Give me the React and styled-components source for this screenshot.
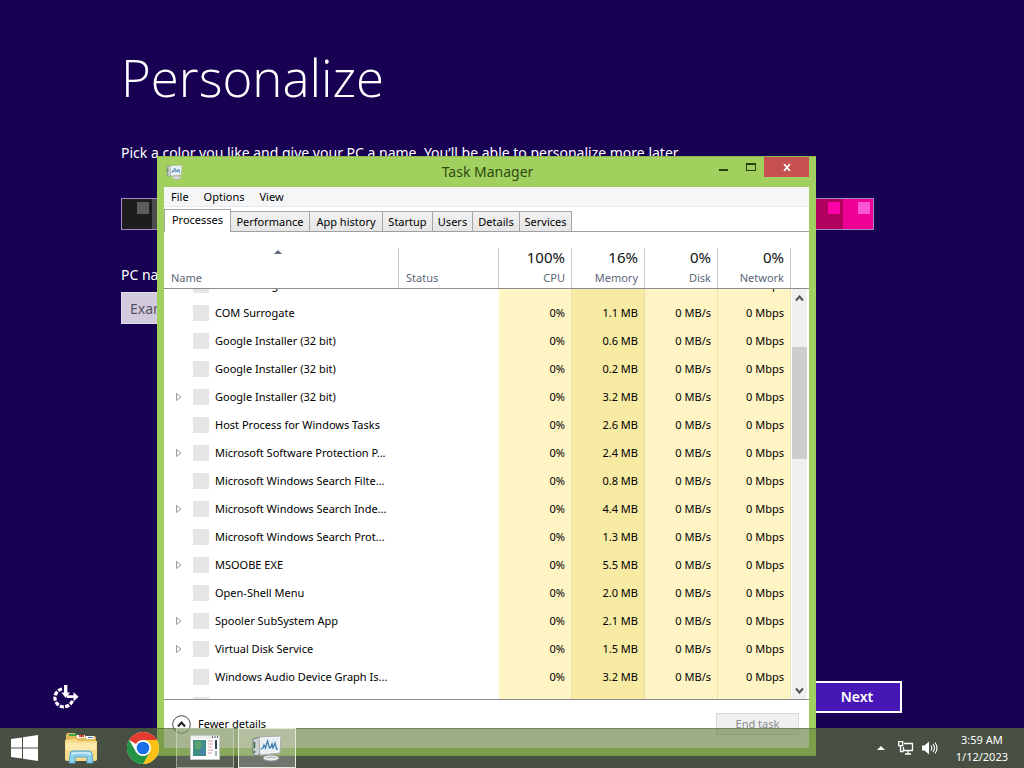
import React, { useLayoutEffect, useRef } from 'react';
import styled, { createGlobalStyle, css } from 'styled-components';

const Global = createGlobalStyle`
  *, *::before, *::after { box-sizing: border-box; }
  body { margin: 0; overflow: hidden; font-family: "Noto Sans", "Open Sans", sans-serif; font-size: 11px; color: #000; }
  button, input { font: inherit; color: inherit; }
`;

const Desktop = styled.div`
  position: relative;
  min-height: 100vh;
  background: #180052;
`;

const Setup = styled.main`
  display: flex;
  flex-direction: column;
  min-height: 100vh;
  padding: 42px 122px 55px 121px;
  color: #fff;
  font-size: 14px;
`;

const Heading = styled.h1`
  margin: 0 0 30px;
  font-family: "Open Sans", sans-serif;
  font-size: 51px;
  line-height: 70px;
  font-weight: 300;
`;

const Lead = styled.p`
  margin: 0 0 34px;
  line-height: 22px;
`;

const Swatches = styled.div`
  display: flex;
  height: 32px;
  margin-right: 28px;
  border: 1px solid #a58ac4;
`;

const Swatch = styled.input`
  appearance: none;
  flex: 1;
  height: 30px;
  margin: 0;
  padding: 3px 3px 0 0;
  background: ${(p) => p.$base};
  display: flex;
  justify-content: flex-end;
  &::after { content: ""; width: 12px; height: 12px; background: ${(p) => p.$accent}; }
`;

const Field = styled.label`
  display: flex;
  flex-direction: column;
  gap: 6px;
  margin-top: 34px;
  width: 300px;
  line-height: 22px;
`;

const NameInput = styled.input`
  height: 32px;
  padding: 0 8px;
  border: 1px solid #e4deec;
  background: #d1cbdd;
  &::placeholder { color: #55505e; opacity: 1; }
`;

const SetupFooter = styled.div`
  display: flex;
  justify-content: space-between;
  align-items: center;
  margin: auto 0 0 -68px;
`;

const PlainButton = styled.button`
  display: flex;
  padding: 0 ${(p) => p.$pad || 0}px;
  border: 0;
  background: none;
`;

const NextButton = styled.button`
  width: 90px;
  height: 32px;
  border: 2px solid #fff;
  background: #4617b4;
  color: #fff;
  font-size: 14px;
  line-height: 20px;
  font-weight: 600;
`;

const Window = styled.section`
  position: absolute;
  inset: 156px 208px 12px 157px;
  display: flex;
  flex-direction: column;
  padding: 0 7px 7px;
  background: #a2d05f;
  border: 1px solid #8db851;
  border-width: 1px 0;
`;

const TitleBar = styled.header`
  display: grid;
  grid-template-columns: 1fr auto 1fr;
  height: 30px;
  padding-left: 2px;
  flex: none;
`;

const Title = styled.h2`
  margin: 0;
  font-size: 14px;
  line-height: 30px;
  font-weight: 400;
  color: #2c4a12;
`;

const TitleIcon = styled.span`
  padding-top: 7px;
`;

const Controls = styled.div`
  display: flex;
  justify-content: flex-end;
`;

const Control = styled.button`
  display: flex;
  align-items: center;
  justify-content: center;
  width: ${(p) => (p.$close ? 45 : 27)}px;
  height: 20px;
  padding: 0;
  border: 0;
  background: ${(p) => (p.$close ? '#c75050' : 'none')};
`;

const Client = styled.div`
  flex: 1;
  min-height: 0;
  display: flex;
  flex-direction: column;
  background: #fff;
`;

const MenuBar = styled.nav`
  display: flex;
  gap: 1px;
  height: 20px;
  flex: none;
  background: #f5f6f7;
  border-bottom: 1px solid #e8e9ea;
`;

const MenuItem = styled.button`
  border: 0;
  padding: 0 7px;
  background: none;
  line-height: 19px;
`;

const Tabs = styled.div`
  display: flex;
  align-items: flex-end;
  height: 25px;
  flex: none;
  border-bottom: 1px solid #a0a0a0;
`;

const Tab = styled.button`
  width: ${(p) => p.$w}px;
  height: 20px;
  padding: 0;
  border: 1px solid #a5a5a5;
  border-width: 1px 1px 0 0;
  background: linear-gradient(#f1f1f1, #e6e6e6);
  line-height: 19px;
  white-space: nowrap;
  ${(p) =>
    p.$active &&
    css`
      height: 23px;
      margin-bottom: -1px;
      padding-bottom: 3px;
      border-left-width: 1px;
      background: #fff;
    `}
`;

const Table = styled.table`
  flex: 1;
  min-height: 0;
  display: flex;
  flex-direction: column;
`;

const rowGrid = css`
  display: grid;
  grid-template-columns: minmax(0, 235fr) 100px repeat(4, 73px);
`;

const Head = styled.thead`
  display: block;
  padding: 16px 18px 0 0;
  border-bottom: 1px solid #8c8c8c;
`;

const HeadRow = styled.tr`
  ${rowGrid}
  height: 40px;
`;

const HeadCell = styled.th`
  display: flex;
  flex-direction: column;
  justify-content: flex-end;
  padding: 0 6px 2px 7px;
  border-right: 1px solid #c9cbce;
  text-align: ${(p) => (p.$num ? 'right' : 'left')};
  line-height: 16px;
  font-weight: 400;
  color: #5b6678;
`;

const Total = styled.span`
  margin-bottom: 4px;
  font-size: 15px;
  line-height: 18px;
  color: #111;
`;

const SortMark = styled.svg`
  align-self: center;
  margin: 0 7px 16px 0;
`;

const Body = styled.tbody`
  flex: 1;
  min-height: 0;
  display: block;
  overflow: hidden;
  margin-right: 18px;
`;

const Row = styled.tr`
  ${rowGrid}
  height: 28px;
  line-height: 28px;
`;

const NameCell = styled.td`
  grid-column: span 2;
  display: flex;
  align-items: center;
  width: 235px;
  padding: 0 5px 0 11px;
`;

const Expander = styled.span`
  display: flex;
  flex: none;
  width: 18px;
`;

const ProcIcon = styled.span`
  flex: none;
  width: 16px;
  height: 16px;
  margin-right: 6px;
  background: #e5e5e5;
`;

const ProcName = styled.span`
  white-space: nowrap;
`;

const Metric = styled.td`
  padding: 0 6px 0 0;
  text-align: right;
  white-space: nowrap;
  background: ${(p) => (p.$hot ? '#f7eaa3' : '#fff4c4')};
  border-right: 1px solid ${(p) => (p.$hot ? '#e6dca0' : '#ece0ac')};
`;

const Grid = styled.div`
  position: relative;
  flex: 1;
  min-height: 0;
  display: flex;
  border-bottom: 1px solid #8c8c8c;
`;

const ScrollBar = styled.div`
  position: absolute;
  inset: 57px 2px 0 auto;
  width: 15px;
  display: flex;
  flex-direction: column;
  align-items: center;
  background: #f0f0f0;
`;

const ScrollButton = styled.button`
  display: flex;
  align-items: center;
  justify-content: center;
  height: 18px;
  width: 15px;
  padding: 0;
  border: 0;
  background: none;
`;

const Thumb = styled.div`
  width: 15px;
  height: 112px;
  margin: 40px 0 auto;
  background: #cdcdcd;
`;

const Footer = styled.footer`
  display: flex;
  justify-content: space-between;
  align-items: center;
  height: 48px;
  flex: none;
  padding: 0 10px 0 8px;
`;

const Fewer = styled.button`
  display: flex;
  align-items: center;
  gap: 7px;
  padding: 0;
  border: 0;
  background: none;
  line-height: 20px;
`;

const EndTask = styled.button`
  width: 83px;
  height: 22px;
  padding: 0;
  border: 1px solid #d9d9d9;
  background: #efefef;
  line-height: 20px;
  &:disabled { color: #8b8b8b; }
`;

const Taskbar = styled.footer`
  position: absolute;
  inset: auto 0 0 0;
  display: flex;
  align-items: stretch;
  height: 40px;
  background: rgba(101, 127, 60, 0.63);
  box-shadow: inset 0 1px rgba(60, 75, 45, 0.4);
`;

const StartButton = styled.button`
  display: flex;
  align-items: center;
  width: 52px;
  padding: 0 0 0 11px;
  border: 0;
  background: none;
`;

const TaskButton = styled.button`
  display: flex;
  align-items: center;
  justify-content: center;
  width: 58px;
  margin-right: 4px;
  padding: 0;
  border: 1px solid ${(p) => (p.$active ? '#e4ebd8' : p.$open ? 'rgba(225,235,210,.5)' : 'transparent')};
  background: ${(p) => (p.$active ? 'rgba(255,255,255,.22)' : p.$open ? 'rgba(255,255,255,.1)' : 'none')};
`;

const Tray = styled.div`
  display: flex;
  align-items: center;
  gap: 8px;
  margin-left: auto;
  padding-right: 16px;
`;

const Clock = styled.time`
  margin-left: 10px;
  color: #fff;
  line-height: 17px;
  text-align: center;
`;

const COLORS = [
  ['#1d1d1d', '#5c5c5c'], ['#4c4c4c', '#f3b200'], ['#261300', '#77b900'], ['#380000', '#2572eb'],
  ['#40002e', '#ad103c'], ['#180052', '#4617b4'], ['#001940', '#006ac1'], ['#001e4e', '#008287'],
  ['#004d60', '#199900'], ['#004a00', '#00c13f'], ['#15992a', '#ff981d'], ['#e56c19', '#ff2e12'],
  ['#b81b1b', '#ff1d77'], ['#b81b6c', '#aa40ff'], ['#691bb8', '#1faeff'], ['#1b58b8', '#56c5ff'],
  ['#569ce3', '#00d8cc'], ['#00aaaa', '#91d100'], ['#83ba1f', '#e1b700'], ['#d39d09', '#ff76bc'],
  ['#e064b7', '#00a3a3'], ['#00a4a4', '#fe7c22'], ['#ff7d23', '#c1004f'], ['#b2005f', '#ff00a8'],
  ['#ef0095', '#ff55d8'],
];

const PROCESSES = [
  ['COM Surrogate', '0.8'], ['COM Surrogate', '1.1'], ['Google Installer (32 bit)', '0.6'],
  ['Google Installer (32 bit)', '0.2'], ['Google Installer (32 bit)', '3.2', true],
  ['Host Process for Windows Tasks', '2.6'], ['Microsoft Software Protection P...', '2.4', true],
  ['Microsoft Windows Search Filte...', '0.8'], ['Microsoft Windows Search Inde...', '4.4', true],
  ['Microsoft Windows Search Prot...', '1.3'], ['MSOOBE EXE', '5.5', true], ['Open-Shell Menu', '2.0'],
  ['Spooler SubSystem App', '2.1', true], ['Virtual Disk Service', '1.5', true],
  ['Windows Audio Device Graph Is...', '3.2'], ['Windows Explorer', '9.7'],
];

const TABS = [
  ['Processes', 67], ['Performance', 79], ['App history', 73], ['Startup', 50], ['Users', 40], ['Details', 47], ['Services', 52],
];

const METRICS = [['100%', 'CPU'], ['16%', 'Memory'], ['0%', 'Disk'], ['0%', 'Network']];

const MonitorIcon = ({ width, height }) => (
  <svg width={width} height={height} viewBox="0 0 32 28" preserveAspectRatio="none" aria-hidden="true">
    <path d="M2 5l7-2v17l-4 2-3-2z" fill="#cdd3d4" stroke="#6f7b7d" />
    <path d="M3.500 8v6M3.500 17v2" stroke="#3f6a4d" strokeWidth="1.500" />
    <path d="M8 3l22-1-1 17-20 2z" fill="#f4f6f6" stroke="#a4adaf" />
    <path d="M10 5l18-1-1 13-17 2z" fill="#e6eff4" />
    <path d="M10 15l2-1 1-3 1.500 3 2-7 2 7 1.500-1 1-3 1 4 2-5 1.500 6 1.500 0" fill="none" stroke="#3a7bb0" strokeWidth="1.300" />
    <path d="M16 20h6v3h-6z" fill="#c4cacb" />
    <ellipse cx="20" cy="24" rx="8" ry="3" fill="#e9ebeb" stroke="#919b9b" />
    <path d="M15 24q5-2 10 0" fill="none" stroke="#aab2b2" />
  </svg>
);

const StartIcon = () => (
  <svg width="27" height="26" viewBox="0 0 27 26" aria-hidden="true">
    <path fill="#fff" d="M0 4l11-1.600V12.400H0zM12 2.200L27 0v12.400H12zM0 13.600h11v10L0 22zM12 13.600h15V26l-15-2.200z" />
  </svg>
);

const FolderIcon = () => (
  <svg width="34" height="32" viewBox="0 0 34 32" aria-hidden="true">
    <path d="M2 3q0-2 2-2h7l2 3h17q2 0 2 2v22H2z" fill="#e2b95a" />
    <path d="M5 2h8v2H5z" fill="#3fa34a" />
    <path d="M13 3h8v3h-8z" fill="#fff" />
    <path d="M15 3h5v2h-5z" fill="#d34836" />
    <path d="M22 4h8v3h-8z" fill="#fff" />
    <path d="M24 5h5v1h-5z" fill="#3d86c6" />
    <path d="M1 8l11-1 2 2h19v18q0 2-2 2H3q-2 0-2-2z" fill="#f6dc8a" />
    <path d="M2 11h30v7H2z" fill="#fbeaab" />
    <path d="M5 31l1-9q0-3 3-3h16q3 0 3 3l1 9h-6v-6H11v6z" fill="#8fd0ec" stroke="#5aa9d0" />
    <path d="M8 23q0-2 2-2h14q2 0 2 2" fill="none" stroke="#d8f1fb" strokeWidth="1.500" />
  </svg>
);

const ChromeIcon = () => (
  <svg width="32" height="32" viewBox="0 0 48 48" aria-hidden="true">
    <circle cx="24" cy="24" r="24" fill="#fff" />
    <path d="M24 24L3.200 12A24 24 0 0 1 44.800 12z" fill="#e33b2e" />
    <path d="M24 12h20.800A24 24 0 0 1 24 48l10.400-18z" fill="#fbc116" />
    <path d="M34.400 30L24 48A24 24 0 0 1 3.200 12l10.400 18z" fill="#229342" />
    <circle cx="24" cy="24" r="12" fill="#fff" />
    <circle cx="24" cy="24" r="9.500" fill="#1a6fe8" />
  </svg>
);

const AppIcon = () => (
  <svg width="30" height="26" viewBox="0 0 30 26" aria-hidden="true">
    <path d="M.5.500h29v24H.5z" fill="#fff" stroke="#c5cbc8" />
    <path d="M1 1h28v3H1z" fill="#eef0f0" />
    <path d="M22 2h1M24.500 2h1M27 2h1" stroke="#333" strokeWidth="1.500" />
    <path d="M3 5h13v16H3z" fill="#3f8f86" />
    <path d="M5 6h6v8H5z" fill="#5ba36b" />
    <path d="M10 13h5v7h-5z" fill="#4784a5" />
    <path d="M18 6h5M18 9h5M18 12h4M18 15h5M18 18h4" stroke="#d99a9a" />
    <path d="M25 5h2v9h-2z" fill="#2d4750" />
    <path d="M25 16h2v5h-2z" fill="#a8b4b6" />
  </svg>
);

const EaseIcon = () => (
  <svg width="26" height="26" viewBox="0 0 26 26" aria-hidden="true">
    <path d="M9 5A9 9 0 1 0 19.500 16.500" fill="none" stroke="#fff" strokeWidth="3.200" strokeDasharray="4.200 1.300" />
    <path d="M11 1h3.400v7.500H17l-4.300 5.500-4.300-5.500H11z" fill="#fff" />
    <path d="M14 11.300h6.500V8l5 4.700-5 4.700v-3.400H14z" fill="#fff" />
  </svg>
);

function ProcessTable() {
  const body = useRef(null);
  useLayoutEffect(() => {
    body.current.scrollTop = 18;
  }, []);
  return (
    <Grid>
      <Table cellSpacing="0">
        <Head>
          <HeadRow>
            <HeadCell>
              <SortMark width="8" height="4" viewBox="0 0 8 4" aria-hidden="true">
                <path d="M4 0l4 4H0z" fill="#5d6a78" />
              </SortMark>
              Name
            </HeadCell>
            <HeadCell>Status</HeadCell>
            {METRICS.map(([total, label]) => (
              <HeadCell key={label} $num>
                <Total>{total}</Total>
                {label}
              </HeadCell>
            ))}
          </HeadRow>
        </Head>
        <Body ref={body}>
          {PROCESSES.map(([name, mem, group], i) => (
            <Row key={i}>
              <NameCell>
                <Expander>
                  {group && (
                    <svg width="8" height="10" viewBox="0 0 8 10" aria-hidden="true">
                      <path d="M1.500 1.500v7L6 5z" fill="#fff" stroke="#9a9a9a" />
                    </svg>
                  )}
                </Expander>
                <ProcIcon />
                <ProcName>{name}</ProcName>
              </NameCell>
              <Metric>0%</Metric>
              <Metric $hot>{mem} MB</Metric>
              <Metric>0 MB/s</Metric>
              <Metric>0 Mbps</Metric>
            </Row>
          ))}
        </Body>
      </Table>
      <ScrollBar>
        <ScrollButton aria-label="Scroll up">
          <svg width="9" height="7" viewBox="0 0 9 7"><path d="M1 5.500l3.500-4 3.500 4" fill="none" stroke="#505050" strokeWidth="2" /></svg>
        </ScrollButton>
        <Thumb />
        <ScrollButton aria-label="Scroll down">
          <svg width="9" height="7" viewBox="0 0 9 7"><path d="M1 1.500l3.500 4 3.500-4" fill="none" stroke="#505050" strokeWidth="2" /></svg>
        </ScrollButton>
      </ScrollBar>
    </Grid>
  );
}

export default function App() {
  return (
    <Desktop>
      <Global />
      <Setup>
        <Heading>Personalize</Heading>
        <Lead>Pick a color you like and give your PC a name. You’ll be able to personalize more later.</Lead>
        <Swatches role="radiogroup" aria-label="Color">
          {COLORS.map(([base, accent], i) => (
            <Swatch key={i} type="radio" name="color" aria-label={base} $base={base} $accent={accent} />
          ))}
        </Swatches>
        <Field>
          PC name
          <NameInput type="text" placeholder="Example: Kitchen-PC" />
        </Field>
        <SetupFooter>
          <PlainButton aria-label="Ease of access"><EaseIcon /></PlainButton>
          <NextButton>Next</NextButton>
        </SetupFooter>
      </Setup>

      <Window>
        <TitleBar>
          <TitleIcon><MonitorIcon width={17} height={16} /></TitleIcon>
          <Title>Task Manager</Title>
          <Controls>
            <Control aria-label="Minimize">
              <svg width="9" height="8" viewBox="0 0 9 8"><path d="M0 6h9v2H0z" fill="#26400c" /></svg>
            </Control>
            <Control aria-label="Maximize">
              <svg width="10" height="8" viewBox="0 0 10 8"><path d="M0 0h10v8H0zM1 2v5h8V2z" fillRule="evenodd" fill="#26400c" /></svg>
            </Control>
            <Control $close aria-label="Close">
              <svg width="8" height="7" viewBox="0 0 8 7"><path d="M1 0l6 7M7 0L1 7" stroke="#fff" strokeWidth="1.700" /></svg>
            </Control>
          </Controls>
        </TitleBar>
        <Client>
          <MenuBar>
            <MenuItem>File</MenuItem>
            <MenuItem>Options</MenuItem>
            <MenuItem>View</MenuItem>
          </MenuBar>
          <Tabs role="tablist">
            {TABS.map(([label, w], i) => (
              <Tab key={label} role="tab" aria-selected={i === 0} $w={w} $active={i === 0}>{label}</Tab>
            ))}
          </Tabs>
          <ProcessTable />
          <Footer>
            <Fewer>
              <svg width="19" height="19" viewBox="0 0 19 19" aria-hidden="true">
                <circle cx="9.500" cy="9.500" r="8.800" fill="#fff" stroke="#444" />
                <path d="M6 11.500l3.500-4 3.500 4" fill="none" stroke="#222" strokeWidth="2" />
              </svg>
              Fewer details
            </Fewer>
            <EndTask disabled>End task</EndTask>
          </Footer>
        </Client>
      </Window>

      <Taskbar>
        <StartButton aria-label="Start"><StartIcon /></StartButton>
        <TaskButton aria-label="File Explorer"><FolderIcon /></TaskButton>
        <TaskButton aria-label="Chrome"><ChromeIcon /></TaskButton>
        <TaskButton $open aria-label="Setup"><AppIcon /></TaskButton>
        <TaskButton $active aria-label="Task Manager"><MonitorIcon width={32} height={28} /></TaskButton>
        <Tray>
          <PlainButton $pad={5} aria-label="Show hidden icons">
            <svg width="8" height="4" viewBox="0 0 8 4"><path d="M4 0l4 4H0z" fill="#fff" /></svg>
          </PlainButton>
          <PlainButton aria-label="Network">
            <svg width="16" height="14" viewBox="0 0 16 14">
              <path d="M6 2.500h8.500v7H5.500V6M7 13h6M10 9.500V13M2.500 5v5.500h3" fill="none" stroke="#fff" strokeWidth="1.300" />
              <path d="M.7.700h4v4h-4z" fill="none" stroke="#fff" strokeWidth="1.300" />
            </svg>
          </PlainButton>
          <PlainButton aria-label="Volume">
            <svg width="16" height="14" viewBox="0 0 16 14">
              <path d="M0 4.500h2.500L7 .500v13L2.500 9.500H0z" fill="#fff" />
              <path d="M9 4.500q1.500 2.500 0 5M11 3q3 4 0 8M13 1.500q4 5.500 0 11" fill="none" stroke="#fff" strokeWidth="1.100" />
            </svg>
          </PlainButton>
          <Clock>3:59 AM<br />1/12/2023</Clock>
        </Tray>
      </Taskbar>
    </Desktop>
  );
}
